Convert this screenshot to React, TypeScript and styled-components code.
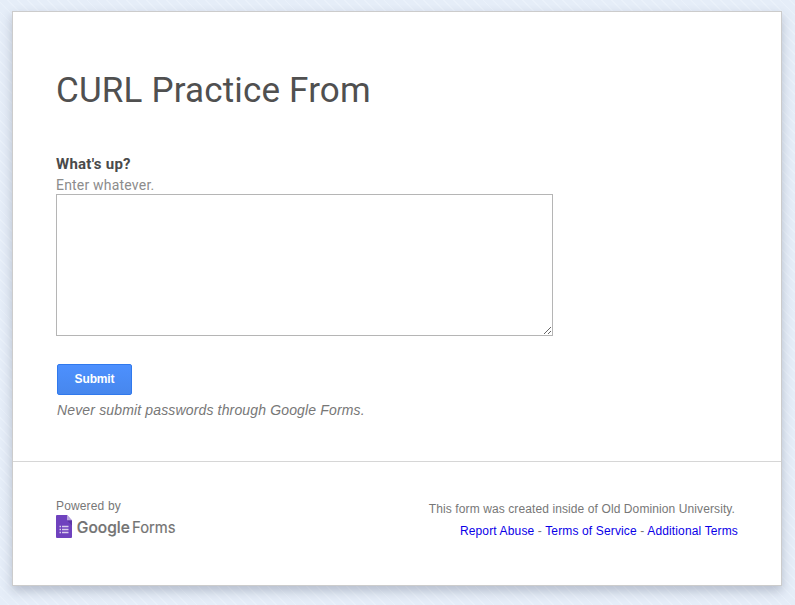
import React from 'react';
import styled, { createGlobalStyle } from 'styled-components';

const GlobalStyle = createGlobalStyle`
  * { box-sizing: border-box; }
  body {
    margin: 0;
    height: 605px;
    overflow: hidden;
    background: repeating-linear-gradient(45deg, #e5edf8 0 5.6px, #eaf1fa 5.8px 7px);
    font-family: "Liberation Sans", Arial, sans-serif;
  }
`;

const Page = styled.div`
  height: 605px;
  padding: 11px 13px 19px 12px;
`;

const Card = styled.main`
  width: 770px;
  height: 575px;
  background: #fff;
  border: 1px solid #ccc;
  box-shadow: 0 5px 10px rgba(50, 60, 85, 0.27);
`;

const FormBody = styled.form`
  height: 449px;
  padding: 58px 43px 0;
`;

const Title = styled.h1`
  margin: 0;
  font: 400 35px/42px Roboto, sans-serif;
  letter-spacing: 0.17px;
  color: #505050;
`;

const Question = styled.label`
  display: block;
  margin-top: 42px;
  font: 700 15px/20px Roboto, sans-serif;
  letter-spacing: 0.27px;
  color: #4a4a4a;
`;

const Help = styled.div`
  padding-top: 2px;
  height: 20px;
  font: 400 14px/18px Roboto, sans-serif;
  letter-spacing: 0.2px;
  color: #8c8c8c;
`;

const Answer = styled.textarea`
  display: block;
  width: 497px;
  height: 142px;
  margin: 0;
  border: 1px solid #b5b5b5;
  border-radius: 0;
  background: #fff;
  outline: none;
  resize: both;
`;

const Submit = styled.button`
  display: block;
  width: 75px;
  height: 31px;
  margin: 28px 0 0 1px;
  padding: 0 0 1px;
  border: 1px solid #3079ed;
  border-radius: 2px;
  background: linear-gradient(#4d90fe, #4787ed);
  color: #fff;
  font: 700 12px/27px "Liberation Sans", Arial, sans-serif;
  letter-spacing: -0.15px;
`;

const Warning = styled.p`
  margin: 6px 0 0 1px;
  font-size: 14px;
  font-style: italic;
  line-height: 18px;
  letter-spacing: 0.15px;
  color: #777;
`;

const Footer = styled.footer`
  display: flex;
  justify-content: space-between;
  height: 124px;
  padding: 36px 43px 0;
  border-top: 1px solid #d6d6d6;
  font-size: 12px;
  color: #777;
`;

const Brand = styled.div`
  line-height: 16px;
  letter-spacing: 0.15px;
`;

const Logo = styled.svg`
  display: block;
  margin-top: 1px;
  letter-spacing: 0;
`;

const Legal = styled.div`
  text-align: right;
  line-height: 22px;
`;

const Notice = styled.div`
  padding-right: 3px;
  letter-spacing: 0.1px;
`;

const Links = styled.div`
  letter-spacing: 0.14px;
`;

const Link = styled.a`
  color: #0a00e8;
  text-decoration: none;
`;

function FormsLogo() {
  return (
    <Logo width="132" height="32" viewBox="0 0 132 32" role="img" aria-label="Google Forms">
      <path d="M1 0H11l5 5.5V22a1 1 0 0 1-1 1H1a1 1 0 0 1-1-1V1a1 1 0 0 1 1-1Z" fill="#6f42be" />
      <path d="M11 0l5 5.5h-5Z" fill="#b9a4de" />
      <path d="M11 5.5h5v5Z" fill="#5d35a6" />
      <path d="M3.5 11.5H5M3.5 14.5H5M3.5 17.5H5M6 11.5h6.500M6 14.5h6.500M6 17.5h6.500" stroke="#d9cdec" strokeWidth="1.4" />
      <g fill="#737373" fontFamily="Inter, sans-serif" fontSize="16">
        <text x="20.8" y="18" fontWeight="500" stroke="#737373" strokeWidth=".2" textLength="53" lengthAdjust="spacingAndGlyphs">Google</text>
        <text x="76" y="18" fontWeight="400" stroke="#737373" strokeWidth=".2" textLength="43.500" lengthAdjust="spacingAndGlyphs">Forms</text>
      </g>
    </Logo>
  );
}

export default function App() {
  return (
    <>
      <GlobalStyle />
      <Page>
        <Card>
          <FormBody onSubmit={(event) => event.preventDefault()}>
            <Title>CURL Practice From</Title>
            <Question htmlFor="answer">What's up?</Question>
            <Help>Enter whatever.</Help>
            <Answer id="answer" />
            <Submit type="submit">Submit</Submit>
            <Warning>Never submit passwords through Google Forms.</Warning>
          </FormBody>
          <Footer>
            <Brand>
              Powered by
              <FormsLogo />
            </Brand>
            <Legal>
              <Notice>This form was created inside of Old Dominion University.</Notice>
              <Links>
                <Link href="#abuse">Report Abuse</Link> - <Link href="#terms">Terms of Service</Link> -{' '}
                <Link href="#additional">Additional Terms</Link>
              </Links>
            </Legal>
          </Footer>
        </Card>
      </Page>
    </>
  );
}
